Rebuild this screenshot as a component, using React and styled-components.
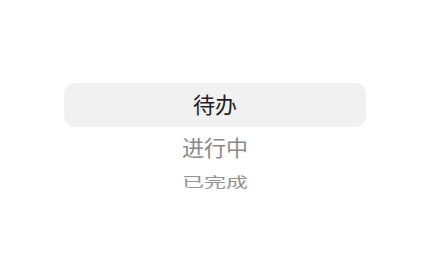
import styled, { createGlobalStyle } from "styled-components";

const GlobalStyle = createGlobalStyle`
  html, body {
    margin: 0;
    padding: 0;
    background: #fff;
  }
  body {
    font-family: "Noto Sans CJK SC", "Noto Sans", sans-serif;
  }
`;

const options = [
  { label: "待办", height: 44, scaleY: 1, color: "#1f1f1f" },
  { label: "进行中", height: 41, scaleY: 0.97, color: "#8a8a8a" },
  { label: "已完成", height: 29, scaleY: 0.6, color: "#939393" },
];

const App = () => {
  return (
    <>
      <GlobalStyle />
      <Page>
        <Wheel>
          {options.map((opt, i) => (
            <Row key={opt.label} $selected={i === 0} $height={opt.height}>
              <Label $color={opt.color} $sy={opt.scaleY}>
                {opt.label}
              </Label>
            </Row>
          ))}
        </Wheel>
      </Page>
    </>
  );
};
export default App;

// 전체 화면
const Page = styled.div`
  width: 429px;
  height: 267px;
  padding-top: 83px;
  box-sizing: border-box;
  display: flex;
  justify-content: center;
`;

// 피커 휠
const Wheel = styled.div`
  width: 302px;
  margin-left: 1px;
  display: flex;
  flex-direction: column;
`;

// 항목 줄
const Row = styled.div`
  height: ${(props) => props.$height}px;
  display: flex;
  align-items: center;
  justify-content: center;
  border-radius: 11px;
  background: ${(props) => (props.$selected ? "#f1f1f1" : "transparent")};
`;

// 항목 텍스트
const Label = styled.span`
  display: inline-block;
  font-size: 22px;
  line-height: 1;
  color: ${(props) => props.$color};
  transform: translateY(-2px) scaleY(${(props) => props.$sy});
`;
